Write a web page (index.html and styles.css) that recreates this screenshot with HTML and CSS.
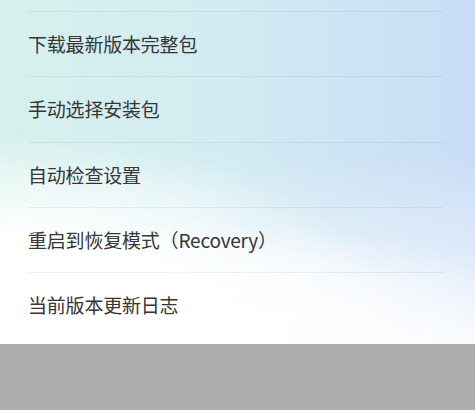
FILE: index.html
```html
<!DOCTYPE html>
<html lang="zh-CN">
<head>
<meta charset="utf-8">
<link rel="stylesheet" href="styles.css">
</head>
<body>
<div class="sheet">
  <ul class="menu">
    <li class="item">下载最新版本完整包</li>
    <li class="item">手动选择安装包</li>
    <li class="item">自动检查设置</li>
    <li class="item">重启到恢复模式（Recovery）</li>
    <li class="item">当前版本更新日志</li>
  </ul>
</div>
<div class="dim"></div>
</body>
</html>
```
FILE: styles.css
```css
html, body {
  margin: 0;
  padding: 0;
  width: 475px;
  height: 410px;
  overflow: hidden;
  background: #adadad;
  font-family: "Noto Sans CJK SC", "Noto Sans", sans-serif;
}
.sheet {
  height: 344px;
  box-sizing: border-box;
  padding: 11px 32px 0 28px;
  background:
    radial-gradient(ellipse 380px 210px at 5% 100%, #ffffff 0%, rgba(255,255,255,0.97) 50%, rgba(255,255,255,0) 100%),
    radial-gradient(ellipse 320px 120px at 50% 100%, rgba(255,255,255,1) 0%, rgba(255,255,255,0.6) 60%, rgba(255,255,255,0) 100%),
    linear-gradient(to bottom, rgba(255,255,255,0) 0%, rgba(255,255,255,0) 45%, rgba(255,255,255,0.8) 100%),
    linear-gradient(to right, #d6f1ec 0%, #d3ecf2 45%, #c9dcf6 100%);
}
.menu {
  list-style: none;
  margin: 0;
  padding: 0;
}
.item {
  height: 65.25px;
  box-sizing: border-box;
  border-top: 1px solid rgba(0, 0, 0, 0.055);
  display: flex;
  align-items: center;
  font-size: 19px;
  color: #363636;
  letter-spacing: -0.2px;
  padding-bottom: 1px;
}
.dim {
  height: 66px;
  background: #adadad;
}
```
